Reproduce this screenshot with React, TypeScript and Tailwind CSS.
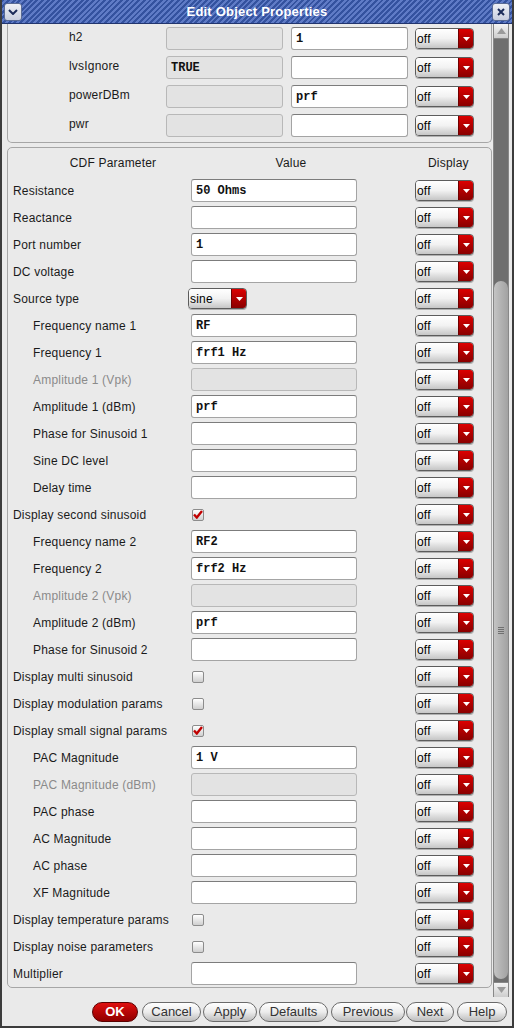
import React from 'react';

type Kind = 'text' | 'disabled' | 'check' | 'cyclic';
type Row = { label: string; kind: Kind; value?: string; indent?: boolean; dim?: boolean; checked?: boolean };

const rows: Row[] = [
  { label: 'Resistance', kind: 'text', value: '50 Ohms' },
  { label: 'Reactance', kind: 'text' },
  { label: 'Port number', kind: 'text', value: '1' },
  { label: 'DC voltage', kind: 'text' },
  { label: 'Source type', kind: 'cyclic', value: 'sine' },
  { label: 'Frequency name 1', kind: 'text', value: 'RF', indent: true },
  { label: 'Frequency 1', kind: 'text', value: 'frf1 Hz', indent: true },
  { label: 'Amplitude 1 (Vpk)', kind: 'disabled', indent: true, dim: true },
  { label: 'Amplitude 1 (dBm)', kind: 'text', value: 'prf', indent: true },
  { label: 'Phase for Sinusoid 1', kind: 'text', indent: true },
  { label: 'Sine DC level', kind: 'text', indent: true },
  { label: 'Delay time', kind: 'text', indent: true },
  { label: 'Display second sinusoid', kind: 'check', checked: true },
  { label: 'Frequency name 2', kind: 'text', value: 'RF2', indent: true },
  { label: 'Frequency 2', kind: 'text', value: 'frf2 Hz', indent: true },
  { label: 'Amplitude 2 (Vpk)', kind: 'disabled', indent: true, dim: true },
  { label: 'Amplitude 2 (dBm)', kind: 'text', value: 'prf', indent: true },
  { label: 'Phase for Sinusoid 2', kind: 'text', indent: true },
  { label: 'Display multi sinusoid', kind: 'check' },
  { label: 'Display modulation params', kind: 'check' },
  { label: 'Display small signal params', kind: 'check', checked: true },
  { label: 'PAC Magnitude', kind: 'text', value: '1 V', indent: true },
  { label: 'PAC Magnitude (dBm)', kind: 'disabled', indent: true, dim: true },
  { label: 'PAC phase', kind: 'text', indent: true },
  { label: 'AC Magnitude', kind: 'text', indent: true },
  { label: 'AC phase', kind: 'text', indent: true },
  { label: 'XF Magnitude', kind: 'text', indent: true },
  { label: 'Display temperature params', kind: 'check' },
  { label: 'Display noise parameters', kind: 'check' },
  { label: 'Multiplier', kind: 'text' },
];

const topRows = [
  { label: 'h2', left: '', right: '1' },
  { label: 'lvsIgnore', left: 'TRUE', right: '' },
  { label: 'powerDBm', left: '', right: 'prf' },
  { label: 'pwr', left: '', right: '' },
];

const Field = ({ value, disabled, w }: { value?: string; disabled?: boolean; w: string }) => (
  <div
    className={`flex h-[23px] shrink-0 items-center rounded-[3px] border pl-[4px] ${w} ${
      disabled ? 'border-[#b8b8b8] bg-[#e3e3e3]' : 'border-[#a4a4a4] border-t-[#7c7c7c] bg-white'
    }`}
  >
    <span className="font-['Liberation_Mono',monospace] text-[12px] font-bold tracking-normal text-[#111]">{value}</span>
  </div>
);

const Cyclic = ({ text = 'off' }: { text?: string }) => (
  <div className="flex h-[21px] w-[59px] shrink-0 overflow-hidden rounded-[4px] border border-[#5c5c5c] shadow-[0_1px_0_#b0b0b0]">
    <div className="flex flex-1 items-center bg-linear-to-b from-white via-[#f2f2f2] to-[#c6c6c6] pl-[1px] text-[12px] text-black">
      {text}
    </div>
    <div className="flex w-[15px] items-center justify-center border-l border-[#700000] bg-linear-to-b from-[#dc0000] to-[#8a0000]">
      <svg width="7" height="4" viewBox="0 0 7 4">
        <path d="M0 0H7L3.5 4Z" fill="#fff" />
      </svg>
    </div>
  </div>
);

const Check = ({ on }: { on?: boolean }) => (
  <div className="ml-[1px] flex h-[12px] w-[12px] items-center justify-center rounded-[2px] border border-[#8c8c8c] bg-linear-to-b from-white to-[#cfcfcf]">
    {on && (
      <svg width="10" height="9" viewBox="0 0 10 9">
        <path d="M1 4.5L3.8 7.5L9 1" stroke="#c00000" strokeWidth="2.4" fill="none" />
      </svg>
    )}
  </div>
);

const Btn = ({ label, w, ok }: { label: string; w: string; ok?: boolean }) => (
  <div
    className={`flex h-[20px] items-center justify-center rounded-full border text-[13px] ${w} ${
      ok
        ? 'border-[#5a0000] bg-linear-to-b from-[#e01010] to-[#900000] font-bold text-white'
        : 'border-[#6a6a6a] bg-linear-to-b from-white via-[#ececec] to-[#bdbdbd] text-[#333]'
    }`}
  >
    {label}
  </div>
);

export default function App() {
  return (
    <div className="flex h-[1028px] w-[514px] flex-col overflow-hidden border-x-2 border-b-2 border-[#3c3c3c] bg-[#eaeaea] font-['Liberation_Sans',Arial,sans-serif] text-[12px] text-[#1a1a1a]">
      {/* title bar */}
      <div className="flex h-[24px] shrink-0 items-center border-b border-[#22356e] bg-[repeating-linear-gradient(135deg,#34529f_0px,#34529f_2px,#5f7bc6_2px,#5f7bc6_4px)] px-[2px]">
        <div className="flex h-[18px] w-[18px] items-center justify-center rounded-[3px] border border-[#5a6b94] bg-linear-to-b from-[#eef0f6] to-[#c9cfdf]">
          <svg width="10" height="6" viewBox="0 0 10 6">
            <path d="M1 1L5 5L9 1" stroke="#1c2c5a" strokeWidth="2" fill="none" />
          </svg>
        </div>
        <div className="flex-1 text-center text-[13px] font-bold tracking-[0.2px] text-white">Edit Object Properties</div>
        <div className="flex h-[18px] w-[18px] items-center justify-center rounded-[3px] border border-[#5a6b94] bg-linear-to-b from-[#eef0f6] to-[#c9cfdf]">
          <svg width="8" height="8" viewBox="0 0 8 8">
            <path d="M1 1L7 7M7 1L1 7" stroke="#1c2c5a" strokeWidth="2" />
          </svg>
        </div>
      </div>

      {/* body */}
      <div className="flex h-[973px] shrink-0">
        <div className="w-[491px] overflow-hidden pl-[5px] tracking-[0.2px]">
          {/* top panel (scrolled) */}
          <div className="flex w-[485px] flex-col gap-[6px] rounded-b-[5px] border-x border-b border-[#a6a6a6] pt-[3px] pb-[5px]">
            {topRows.map((r) => (
              <div key={r.label} className="flex h-[23px] items-center">
                <div className="w-[158px] shrink-0 self-start pt-[3px] pl-[61px] leading-[14px]">{r.label}</div>
                <Field w="w-[117px]" disabled value={r.left} />
                <div className="w-[8px] shrink-0" />
                <Field w="w-[117px]" value={r.right} />
                <div className="w-[7px] shrink-0" />
                <Cyclic />
              </div>
            ))}
          </div>

          {/* main panel */}
          <div className="mt-[4px] w-[485px] rounded-[5px] border border-[#a6a6a6]">
            <div className="flex h-[29px] items-center">
              <div className="w-[210px] shrink-0 text-center">CDF Parameter</div>
              <div className="w-[146px] shrink-0 text-center">Value</div>
              <div className="shrink-0 pl-[64px]">Display</div>
            </div>
            {rows.map((r) => (
              <div key={r.label} className="flex h-[27px] items-center">
                <div
                  className={`w-[183px] shrink-0 ${r.indent ? 'pl-[25px]' : 'pl-[5px]'} ${
                    r.dim ? 'text-[#8a8a8a]' : ''
                  }`}
                >
                  {r.label}
                </div>
                <div className="flex w-[224px] shrink-0 items-center">
                  {r.kind === 'text' && <Field w="w-[166px]" value={r.value} />}
                  {r.kind === 'disabled' && <Field w="w-[166px]" disabled />}
                  {r.kind === 'check' && <Check on={r.checked} />}
                  {r.kind === 'cyclic' && (
                    <div className="-ml-[3px]">
                      <Cyclic text={r.value} />
                    </div>
                  )}
                </div>
                <Cyclic />
              </div>
            ))}
          </div>
        </div>

        {/* scrollbar */}
        <div className="flex w-[16px] flex-col border-x border-[#888] bg-[#6f6f6f]">
          <div className="flex h-[15px] items-center justify-center border-b border-[#888] bg-linear-to-b from-[#f4f4f4] to-[#cdcdcd]">
            <svg width="9" height="6" viewBox="0 0 9 6">
              <path d="M0 6H9L4.5 0Z" fill="#9a9a9a" />
            </svg>
          </div>
          <div className="h-[242px]" />
          <div className="flex flex-1 items-center justify-center rounded-t-[7px] rounded-b-[7px] bg-linear-to-r from-[#c4c4c4] via-[#b2b2b2] to-[#a2a2a2]">
            <div className="flex flex-col gap-[1px]">
              <div className="h-[1px] w-[6px] bg-[#707070]" />
              <div className="h-[1px] w-[6px] bg-[#707070]" />
              <div className="h-[1px] w-[6px] bg-[#707070]" />
              <div className="h-[1px] w-[6px] bg-[#707070]" />
            </div>
          </div>
          <div className="h-[3px]" />
          <div className="flex h-[15px] items-center justify-center border-t border-[#888] bg-linear-to-b from-[#f4f4f4] to-[#cdcdcd]">
            <svg width="9" height="6" viewBox="0 0 9 6">
              <path d="M0 0H9L4.5 6Z" fill="#9a9a9a" />
            </svg>
          </div>
        </div>
      </div>

      {/* buttons */}
      <div className="flex flex-1 items-start pt-[5px] pl-[90px]">
        <Btn ok label="OK" w="w-[46px]" />
        <div className="w-[4px]" />
        <Btn label="Cancel" w="w-[59px]" />
        <div className="w-[2px]" />
        <Btn label="Apply" w="w-[54px]" />
        <div className="w-[2px]" />
        <Btn label="Defaults" w="w-[69px]" />
        <div className="w-[3px]" />
        <Btn label="Previous" w="w-[74px]" />
        <div className="w-[1px]" />
        <Btn label="Next" w="w-[48px]" />
        <div className="w-[3px]" />
        <Btn label="Help" w="w-[50px]" />
      </div>
    </div>
  );
}
